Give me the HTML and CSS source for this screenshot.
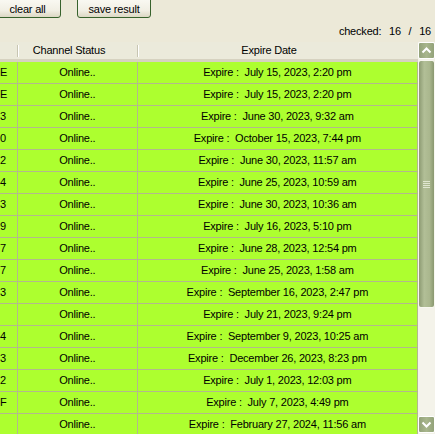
FILE: index.html
```html
<!DOCTYPE html>
<html lang="en">
<head>
    <meta charset="UTF-8">
    <title>channel checker</title>
    <link rel="stylesheet" href="styles.css">
</head>
<body>
    <div class="toolbar">
        <button class="btn btnclear">clear all</button>
        <button class="btn btnsave">save result</button>
    </div>
    <div class="counter">checked:&nbsp; 16 &nbsp;/&nbsp; 16</div>
    <div class="gridwrap">
        <div class="grid">
            <div class="head">
                <div class="hcell c1"></div>
                <div class="hcell c2">Channel Status</div>
                <div class="hcell c3">Expire Date</div>
            </div>
            <div class="row"><div class="cell c1">E</div><div class="cell c2">Online..</div><div class="cell c3">Expire :  July 15, 2023, 2:20 pm</div></div>
            <div class="row"><div class="cell c1">E</div><div class="cell c2">Online..</div><div class="cell c3">Expire :  July 15, 2023, 2:20 pm</div></div>
            <div class="row"><div class="cell c1">3</div><div class="cell c2">Online..</div><div class="cell c3">Expire :  June 30, 2023, 9:32 am</div></div>
            <div class="row"><div class="cell c1">0</div><div class="cell c2">Online..</div><div class="cell c3">Expire :  October 15, 2023, 7:44 pm</div></div>
            <div class="row"><div class="cell c1">2</div><div class="cell c2">Online..</div><div class="cell c3">Expire :  June 30, 2023, 11:57 am</div></div>
            <div class="row"><div class="cell c1">4</div><div class="cell c2">Online..</div><div class="cell c3">Expire :  June 25, 2023, 10:59 am</div></div>
            <div class="row"><div class="cell c1">3</div><div class="cell c2">Online..</div><div class="cell c3">Expire :  June 30, 2023, 10:36 am</div></div>
            <div class="row"><div class="cell c1">9</div><div class="cell c2">Online..</div><div class="cell c3">Expire :  July 16, 2023, 5:10 pm</div></div>
            <div class="row"><div class="cell c1">7</div><div class="cell c2">Online..</div><div class="cell c3">Expire :  June 28, 2023, 12:54 pm</div></div>
            <div class="row"><div class="cell c1">7</div><div class="cell c2">Online..</div><div class="cell c3">Expire :  June 25, 2023, 1:58 am</div></div>
            <div class="row"><div class="cell c1">3</div><div class="cell c2">Online..</div><div class="cell c3">Expire :  September 16, 2023, 2:47 pm</div></div>
            <div class="row"><div class="cell c1"></div><div class="cell c2">Online..</div><div class="cell c3">Expire :  July 21, 2023, 9:24 pm</div></div>
            <div class="row"><div class="cell c1">4</div><div class="cell c2">Online..</div><div class="cell c3">Expire :  September 9, 2023, 10:25 am</div></div>
            <div class="row"><div class="cell c1">3</div><div class="cell c2">Online..</div><div class="cell c3">Expire :  December 26, 2023, 8:23 pm</div></div>
            <div class="row"><div class="cell c1">2</div><div class="cell c2">Online..</div><div class="cell c3">Expire :  July 1, 2023, 12:03 pm</div></div>
            <div class="row"><div class="cell c1">F</div><div class="cell c2">Online..</div><div class="cell c3">Expire :  July 7, 2023, 4:49 pm</div></div>
            <div class="row"><div class="cell c1"></div><div class="cell c2">Online..</div><div class="cell c3">Expire :  February 27, 2024, 11:56 am</div></div>
        </div>
        <div class="scrollbar">
            <div class="arrow">
                <svg width="11" height="7" viewBox="0 0 11 7"><path d="M1.5 5.5 L5.5 1.5 L9.5 5.5" fill="none" stroke="#fff" stroke-width="2"/></svg>
            </div>
            <div class="thumb">
                <div class="grip"></div>
            </div>
            <div class="track"></div>
            <div class="arrow">
                <svg width="11" height="7" viewBox="0 0 11 7"><path d="M1.5 1.5 L5.5 5.5 L9.5 1.5" fill="none" stroke="#fff" stroke-width="2"/></svg>
            </div>
        </div>
    </div>
</body>
</html>
```

FILE: styles.css
```css
body {
    margin: 0;
    background-color: #ece9d8;
    font-family: "Liberation Sans", Arial, sans-serif;
    font-size: 11px;
    letter-spacing: -0.2px;
    color: #000;
    overflow: hidden;
    width: 435px;
    height: 434px;
}
.toolbar {
    display: flex;
    height: 18px;
    margin-top: -6px;
    padding-bottom: 6px;
}
.btn {
    font-family: "Liberation Sans", Arial, sans-serif;
    font-size: 11px;
    letter-spacing: -0.2px;
    height: 24px;
    padding: 6px 0 0 0;
    border: 1px solid #37622c;
    border-radius: 3px;
    background: linear-gradient(#fdfdf8, #f1efe4 70%, #dcd8c4);
    color: #000;
    text-align: center;
}
.btnclear {
    width: 73px;
    margin-left: -12px;
    padding-left: 6px;
}
.btnsave {
    width: 74px;
    margin-left: 16px;
}
.counter {
    height: 18px;
    padding-top: 6px;
    line-height: 14px;
    text-align: right;
    padding-right: 4px;
    word-spacing: 1px;
}
.gridwrap {
    display: flex;
}
.grid {
    width: 418px;
    height: 392px;
    overflow: hidden;
}
.head {
    display: flex;
    height: 17px;
    background-color: #ebeadb;
    border-bottom: 3px solid #d6d2c0;
    box-shadow: 0 1px 0 #cbc7b8;
}
.hcell {
    position: relative;
    line-height: 17px;
    text-align: center;
}
.hcell.c1::after,
.hcell.c2::after {
    content: "";
    position: absolute;
    right: 0;
    top: 3px;
    width: 1px;
    height: 12px;
    background-color: #c7c5b2;
    box-shadow: 1px 0 0 #fff;
}
.row {
    display: flex;
    height: 21px;
    background-color: #adff2f;
    border-bottom: 1px solid #b3b88e;
}
.cell {
    line-height: 21px;
    text-align: center;
    white-space: pre;
    overflow: hidden;
    border-right: 1px solid #b3b88e;
}
.c1 {
    width: 17px;
    text-align: left;
}
.c2 {
    width: 119px;
}
.c3 {
    width: 280px;
}
.head .c1 { width: 18px; }
.head .c2 { width: 120px; padding-right: 18px; box-sizing: border-box; }
.head .c3 { width: 280px; padding-right: 18px; box-sizing: border-box; }
.scrollbar {
    width: 17px;
    height: 392px;
    display: flex;
    flex-direction: column;
    background-color: #f4f3ea;
}
.arrow {
    height: 15px;
    margin: 0 0 1px 0;
    border: 1px solid #fff;
    border-radius: 2px;
    background: linear-gradient(90deg, #93a27a, #a8b68c 50%, #93a27a);
    display: flex;
    align-items: center;
    justify-content: center;
}
.thumb {
    height: 246px;
    border: 1px solid #f8f8f0;
    border-radius: 3px;
    background: linear-gradient(90deg, #8d9b73, #b2bf97 35%, #aab78e 70%, #8a9870);
    display: flex;
    align-items: center;
    justify-content: center;
}
.grip {
    width: 7px;
    height: 7px;
    background: repeating-linear-gradient(#dfe6cf 0 1px, transparent 1px 2px);
}
.track {
    flex: 1;
}
```
